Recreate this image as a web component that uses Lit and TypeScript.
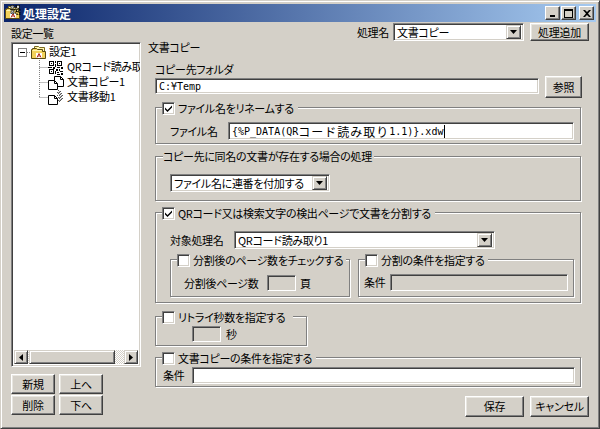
import { LitElement, html, css, svg } from "lit";
import { customElement } from "lit/decorators.js";

const folder = svg`
  <path d="M3.5 3.5V1.5H7.5L8.5 2.5H13.5V8.5" fill="#fff6b0" stroke="#7a6a20"/>
  <path d="M0.5 13.5V4.5H1.5V3.5H5.5L6.5 4.5H11.5V6.5H14.5V13.5Z" fill="#f2d25a" stroke="#5a4a10"/>
  <path d="M1.5 5.5H10.5" stroke="#fff6b0"/>
  <rect x="5" y="8" width="6" height="5" fill="#fff"/>
  <path d="M6 12.5L8 8.5L10 12.5M7 11H9" fill="none" stroke="#b03020"/>`;

const qr = svg`
  <path fill="#000" d="M1 0h5v5H1zM9 0h5v5H9zM1 8h5v5H1z"/>
  <path fill="#fff" d="M2 1h3v3H2zM10 1h3v3h-3zM2 9h3v3H2z"/>
  <path fill="#000" d="M3 2h1v1H3zM11 2h1v1h-1zM3 10h1v1H3zM7 0h1v2H7zM7 3h1v3H7zM0 6h4v1H0zM5 6h2v2H5zM9 6h3v1H9zM13 6h2v2h-2zM8 8h2v2H8zM11 8h1v2h-1zM7 10h1v3H7zM9 11h2v1H9zM12 10h3v1h-3zM13 12h2v2h-2zM9 13h3v1H9z"/>`;

const copyDoc = svg`
  <path d="M6.5 0.5H12.5L15.5 3.5V10.5H6.5Z" fill="#fff" stroke="#000"/>
  <path d="M12.5 0.5V3.5H15.5" fill="none" stroke="#000"/>
  <path d="M0.5 4.5H6.5L9.5 7.5V13.5H0.5Z" fill="#fff" stroke="#000"/>
  <path d="M6.5 4.5V7.5H9.5" fill="none" stroke="#000"/>`;

const moveDoc = svg`
  <path fill="#555" d="M10 0h1v1h-1zM12 1h1v1h-1zM9 2h1v1H9zM11 2h1v1h-1zM13 3h1v1h-1zM10 3h1v1h-1zM12 4h1v1h-1zM14 5h1v1h-1zM11 5h1v1h-1zM9 5h1v1H9zM13 6h1v1h-1zM10 7h1v1h-1zM12 7h1v1h-1zM14 8h1v1h-1zM11 8h1v1h-1zM13 9h1v1h-1zM10 10h1v1h-1zM12 10h1v1h-1zM11 11h1v1h-1z"/>
  <path fill="#a8a8a8" d="M11 1h1v1h-1zM10 2h1v1h-1zM12 3h1v1h-1zM11 4h1v1h-1zM13 5h1v1h-1zM12 6h1v1h-1zM11 7h1v1h-1zM13 8h1v1h-1zM12 9h1v1h-1zM11 10h1v1h-1z"/>
  <path d="M0.5 5.5H6.5L9.5 8.5V14.5H0.5Z" fill="#fff" stroke="#000"/>
  <path d="M6.5 5.5V8.5H9.5" fill="none" stroke="#000"/>`;

const check = svg`<svg class="tick" width="9" height="9" viewBox="0 0 9 9"><path d="M1 3.5L3.5 6L8 1.5V3.5L3.5 8L1 5.5Z" fill="#000"/></svg>`;

const arrow = html`<span class="drop"><svg width="7" height="4" viewBox="0 0 7 4"><path d="M0 0H7L3.5 4Z" fill="#000"/></svg></span>`;

@customElement("app-root")
export class AppRoot extends LitElement {
  static styles = css`
    :host {
      display: block;
      width: 600px;
      height: 429px;
      font: 11px/13px "Noto Sans CJK JP", "Noto Sans", sans-serif;
      font-feature-settings: "palt";
      letter-spacing: -0.3px;
      color: #000;
    }
    * { box-sizing: border-box; }
    .window {
      width: 600px;
      height: 429px;
      background: #d4d0c8;
      padding: 3px 3px 1px;
      border: 1px solid;
      border-color: #d4d0c8 #404040 #404040 #d4d0c8;
      box-shadow: inset 1px 1px 0 #fff, inset -1px -1px 0 #808080;
      display: flex;
      flex-direction: column;
    }
    .title {
      height: 18px;
      flex: none;
      display: flex;
      align-items: center;
      padding: 0 2px 0 1px;
      gap: 1px;
      color: #fff;
      font-weight: 700;
      font-size: 12px;
      letter-spacing: 0;
      background: linear-gradient(90deg, #0a246a, #a6caf0);
    }
    .title span { flex: 1; padding-left: 1px; }
    .cap {
      width: 15px;
      height: 14px;
      flex: none;
      background: #d4d0c8;
      border: 1px solid;
      border-color: #fff #404040 #404040 #fff;
      box-shadow: inset -1px -1px 0 #808080;
      display: flex;
      align-items: center;
      justify-content: center;
    }
    .cap.last { margin-left: 2px; }
    .body {
      flex: 1;
      display: flex;
      gap: 7px;
      padding: 1px 7px 0;
    }
    .left { width: 130px; flex: none; }
    .left .head { margin-top: 4px; height: 15px; }
    .tree {
      position: relative;
      height: 325px;
      background: #fff;
      border: 1px solid;
      border-color: #808080 #fff #fff #808080;
      box-shadow: inset 1px 1px 0 #404040, inset -1px -1px 0 #d4d0c8;
      padding: 2px 2px 0;
      overflow: hidden;
    }
    .lines { position: absolute; left: 2px; top: 2px; }
    .row {
      position: relative;
      height: 15px;
      display: flex;
      align-items: center;
      white-space: nowrap;
    }
    .row span { margin-bottom: 2px; }
    .row.root { padding-left: 4px; }
    .row.child { padding-left: 34px; gap: 3px; }
    .exp {
      width: 9px;
      height: 9px;
      border: 1px solid #808080;
      background: #fff;
      display: flex;
      align-items: center;
      justify-content: center;
      margin-right: 4px;
      flex: none;
    }
    .exp i { width: 5px; height: 1px; background: #000; }
    .row svg { flex: none; }
    .row.root svg + span { margin-left: 3px; }
    .hbar {
      position: absolute;
      left: 2px;
      right: 2px;
      bottom: 2px;
      height: 14px;
      display: flex;
      background: repeating-conic-gradient(#fff 0 25%, #d4d0c8 0 50%) 0 0 / 2px 2px;
    }
    .sb {
      background: #d4d0c8;
      border: 1px solid;
      border-color: #d4d0c8 #404040 #404040 #d4d0c8;
      box-shadow: inset 1px 1px 0 #fff, inset -1px -1px 0 #808080;
      display: flex;
      align-items: center;
      justify-content: center;
      flex: none;
    }
    .sb.arrowbtn { width: 14px; }
    .sb.thumb { width: 86px; margin-left: 1px; }
    .spacer { flex: 1; }
    .lbtns {
      display: grid;
      grid-template-columns: 44px 44px;
      grid-auto-rows: 20px;
      column-gap: 4px;
      row-gap: 1px;
      margin-top: 7px;
      justify-content: start;
    }
    .btn {
      background: #d4d0c8;
      border: 1px solid;
      border-color: #fff #404040 #404040 #fff;
      box-shadow: inset -1px -1px 0 #808080, inset 1px 1px 0 #e8e6e0;
      display: flex;
      align-items: center;
      justify-content: center;
      white-space: nowrap;
    }
    .right { width: 441px; flex: none; }
    .top {
      height: 18px;
      display: flex;
      align-items: center;
      justify-content: flex-end;
    }
    .top .name { margin-right: 4px; }
    .top .btn { width: 59px; height: 18px; margin-left: 6px; }
    .inset { padding-left: 7px; }
    .sec { height: 13px; }
    .folderlabel { margin-top: 9px; }
    .folderrow {
      display: flex;
      align-items: flex-start;
      height: 22px;
    }
    .folderrow .field { width: 384px; margin-top: 2px; height: 16px; }
    .folderrow .btn { width: 37px; height: 22px; margin-left: 6px; }
    .field {
      background: #fff;
      border: 1px solid;
      border-color: #808080 #fff #fff #808080;
      box-shadow: inset 1px 1px 0 #404040, inset -1px -1px 0 #d4d0c8;
      height: 17px;
      padding-left: 3px;
      display: flex;
      align-items: center;
      white-space: nowrap;
      overflow: hidden;
      flex: none;
    }
    .field.off { background: #d4d0c8; }
    .mono { font: 10px/13px "DejaVu Sans Mono", monospace; letter-spacing: 0; }
    .wide { font-size: 12px; font-feature-settings: normal; letter-spacing: 1px; }
    .caret { width: 1px; height: 13px; background: #000; flex: none; margin-left: 1px; }
    .combo {
      background: #fff;
      border: 1px solid;
      border-color: #808080 #fff #fff #808080;
      box-shadow: inset 1px 1px 0 #404040, inset -1px -1px 0 #d4d0c8;
      height: 18px;
      padding: 2px 2px 2px 3px;
      display: flex;
      align-items: center;
      justify-content: space-between;
      white-space: nowrap;
      flex: none;
    }
    .drop {
      width: 15px;
      height: 14px;
      flex: none;
      background: #d4d0c8;
      border: 1px solid;
      border-color: #d4d0c8 #404040 #404040 #d4d0c8;
      box-shadow: inset 1px 1px 0 #fff, inset -1px -1px 0 #808080;
      display: flex;
      align-items: center;
      justify-content: center;
    }
    .group {
      border: 1px solid #808080;
      box-shadow: 1px 1px 0 #fff, inset 1px 1px 0 #fff;
      flex: none;
    }
    .main { margin-left: 7px; width: 426px; }
    .legend {
      display: flex;
      align-items: center;
      width: fit-content;
      height: 13px;
      background: #d4d0c8;
      margin: -6px 0 0 6px;
      padding-right: 4px;
      white-space: nowrap;
    }
    .legend.text { margin-top: -7px; margin-left: 7px; padding: 0 2px 0 0; }
    .cb {
      position: relative;
      width: 13px;
      height: 13px;
      margin-right: 3px;
      background: #fff;
      border: 1px solid;
      border-color: #808080 #fff #fff #808080;
      box-shadow: inset 1px 1px 0 #404040, inset -1px -1px 0 #d4d0c8;
      flex: none;
      display: flex;
      align-items: center;
      justify-content: center;
    }
    .line { display: flex; align-items: center; white-space: nowrap; }
    .lab { flex: none; }
    .g1 { height: 37px; margin-top: 9px; }
    .g1 .line { margin: 7px 0 0 14px; }
    .g1 .lab { width: 58px; }
    .g1 .field { width: 346px; height: 18px; }
    .g2 { height: 45px; margin-top: 12px; }
    .g2 .combo { width: 160px; margin: 11px 0 0 14px; }
    .g3 { height: 91px; margin-top: 11px; }
    .g3 > .line { margin: 11px 0 0 14px; }
    .g3 .lab { width: 64px; }
    .g3 .combo { width: 261px; }
    .subs { display: flex; gap: 8px; margin: 10px 0 0 14px; }
    .sa { width: 180px; height: 38px; }
    .sb2 { width: 216px; height: 38px; }
    .sa .legend, .sb2 .legend { margin-left: 6px; padding-right: 3px; }
    .sa .line { margin: 8px 0 0 13px; }
    .sa .lab { width: 83px; }
    .sa .field { width: 29px; height: 16px; margin-right: 4px; background: #d4d0c8; }
    .sb2 .line { margin: 7px 0 0 5px; }
    .sb2 .lab { width: 26px; }
    .sb2 .field { width: 178px; height: 17px; }
    .g4 { width: 152px; height: 30px; margin: 13px 0 0 7px; }
    .g4 .legend { padding-right: 8px; }
    .g4 .line { margin: 2px 0 0 36px; }
    .g4 .field { width: 29px; height: 16px; margin-right: 5px; background: #d4d0c8; }
    .g5 { height: 30px; margin-top: 11px; }
    .g5 .line { margin: 2px 0 0 7px; }
    .g5 .lab { width: 29px; }
    .g5 .field { width: 383px; height: 17px; }
    .foot { display: flex; justify-content: flex-end; gap: 6px; margin-top: 9px; }
    .foot .btn { width: 59px; height: 21px; }
  `;

  private cb(on = false) {
    return html`<span class="cb">${on ? check : ""}</span>`;
  }

  render() {
    return html`
      <div class="window">
        <div class="title">
          <svg width="16" height="16" viewBox="0 0 16 16">${folder}<g transform="translate(5 0) scale(.7)">${qr}</g></svg>
          <span>処理設定</span>
          <div class="cap"><svg width="8" height="8" viewBox="0 0 8 8"><path d="M1 6h5v2H1z"/></svg></div>
          <div class="cap"><svg width="9" height="9" viewBox="0 0 9 9"><path d="M0 0h9v9H0zM1 2v6h7V2z" fill-rule="evenodd"/></svg></div>
          <div class="cap last"><svg width="8" height="7" viewBox="0 0 8 7"><path d="M0 0h2l2 2 2-2h2L5 3.500 8 7H6L4 5 2 7H0l3-3.500z"/></svg></div>
        </div>
        <div class="body">
          <div class="left">
            <div class="head">設定一覧</div>
            <div class="tree">
              <svg class="lines" width="60" height="70" viewBox="0 0 60 70">
                <path d="M25.500 15V52.500M25.500 22.500H34M25.500 37.500H34M25.500 52.500H34M13 7.500H17" fill="none" stroke="#808080" stroke-dasharray="1 1"/>
              </svg>
              <div class="row root">
                <div class="exp"><i></i></div>
                <svg width="15" height="15" viewBox="0 0 15 15">${folder}</svg>
                <span>設定1</span>
              </div>
              <div class="row child"><svg width="16" height="14" viewBox="0 0 16 14">${qr}</svg><span>QRコード読み取り1</span></div>
              <div class="row child"><svg width="16" height="14" viewBox="0 0 16 14">${copyDoc}</svg><span>文書コピー1</span></div>
              <div class="row child"><svg width="16" height="15" viewBox="0 0 16 15">${moveDoc}</svg><span>文書移動1</span></div>
              <div class="hbar">
                <div class="sb arrowbtn"><svg width="4" height="7" viewBox="0 0 4 7"><path d="M4 0V7L0 3.500Z"/></svg></div>
                <div class="sb thumb"></div>
                <div class="spacer"></div>
                <div class="sb arrowbtn"><svg width="4" height="7" viewBox="0 0 4 7"><path d="M0 0V7L4 3.500Z"/></svg></div>
              </div>
            </div>
            <div class="lbtns">
              <div class="btn">新規</div><div class="btn">上へ</div>
              <div class="btn">削除</div><div class="btn">下へ</div>
            </div>
          </div>
          <div class="right">
            <div class="top">
              <span class="name">処理名</span>
              <div class="combo" style="width:131px"><span>文書コピー</span>${arrow}</div>
              <div class="btn">処理追加</div>
            </div>
            <div class="sec">文書コピー</div>
            <div class="sec inset folderlabel">コピー先フォルダ</div>
            <div class="folderrow inset">
              <div class="field mono">C:¥Temp</div>
              <div class="btn">参照</div>
            </div>

            <div class="group main g1">
              <div class="legend">${this.cb(true)}<span>ファイル名をリネームする</span></div>
              <div class="line">
                <span class="lab">ファイル名</span>
                <div class="field"><span class="mono">{%P_DATA(QR</span><span class="wide">コード読み取り</span><span class="mono">1.1)}.xdw</span><i class="caret"></i></div>
              </div>
            </div>

            <div class="group main g2">
              <div class="legend text">コピー先に同名の文書が存在する場合の処理</div>
              <div class="combo"><span>ファイル名に連番を付加する</span>${arrow}</div>
            </div>

            <div class="group main g3">
              <div class="legend">${this.cb(true)}<span>QRコード又は検索文字の検出ページで文書を分割する</span></div>
              <div class="line">
                <span class="lab">対象処理名</span>
                <div class="combo"><span>QRコード読み取り1</span>${arrow}</div>
              </div>
              <div class="subs">
                <div class="group sa">
                  <div class="legend">${this.cb()}<span>分割後のページ数をチェックする</span></div>
                  <div class="line"><span class="lab">分割後ページ数</span><div class="field"></div><span>頁</span></div>
                </div>
                <div class="group sb2">
                  <div class="legend">${this.cb()}<span>分割の条件を指定する</span></div>
                  <div class="line"><span class="lab">条件</span><div class="field off"></div></div>
                </div>
              </div>
            </div>

            <div class="group g4">
              <div class="legend">${this.cb()}<span>リトライ秒数を指定する</span></div>
              <div class="line"><div class="field"></div><span>秒</span></div>
            </div>

            <div class="group main g5">
              <div class="legend">${this.cb()}<span>文書コピーの条件を指定する</span></div>
              <div class="line"><span class="lab">条件</span><div class="field"></div></div>
            </div>

            <div class="foot">
              <div class="btn">保存</div>
              <div class="btn">キャンセル</div>
            </div>
          </div>
        </div>
      </div>
    `;
  }
}
